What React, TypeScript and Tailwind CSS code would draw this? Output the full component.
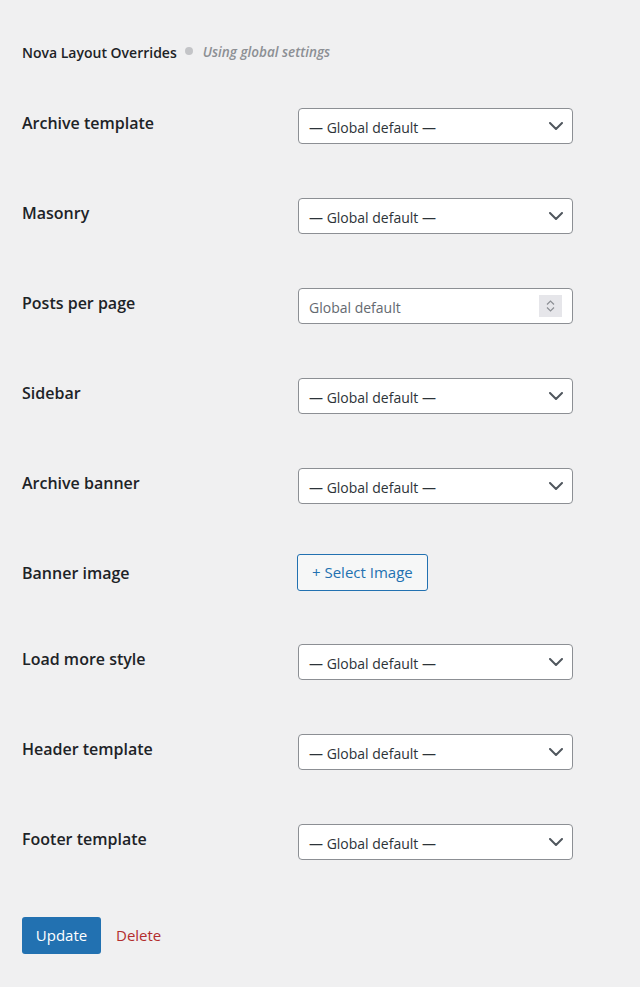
import React from "react";

type Field =
  | { label: string; kind: "select"; h: string }
  | { label: string; kind: "number"; h: string }
  | { label: string; kind: "image"; h: string };

const fields: Field[] = [
  { label: "Archive template", kind: "select", h: "h-[90px]" },
  { label: "Masonry", kind: "select", h: "h-[90px]" },
  { label: "Posts per page", kind: "number", h: "h-[90px]" },
  { label: "Sidebar", kind: "select", h: "h-[90px]" },
  { label: "Archive banner", kind: "select", h: "h-[86px]" },
  { label: "Banner image", kind: "image", h: "h-[90px]" },
  { label: "Load more style", kind: "select", h: "h-[90px]" },
  { label: "Header template", kind: "select", h: "h-[90px]" },
  { label: "Footer template", kind: "select", h: "h-[93px]" },
];

function Chevron() {
  return (
    <svg width="14" height="8" viewBox="0 0 14 8" fill="none" className="shrink-0">
      <path d="M1 1l6 6 6-6" stroke="#50575e" strokeWidth="2" strokeLinecap="round" strokeLinejoin="round" />
    </svg>
  );
}

function SelectBox() {
  return (
    <div className="flex h-[36px] w-[275px] items-center justify-between rounded-[4px] border border-[#8c8f94] bg-white pl-[10px] pr-[9px] text-[14px] text-[#2c3338]">
      <span className="translate-y-[1px]">— Global default —</span>
      <Chevron />
    </div>
  );
}

function NumberBox() {
  return (
    <div className="flex h-[36px] w-[275px] items-center justify-between rounded-[4px] border border-[#8c8f94] bg-white pl-[10px] pr-[10px] text-[14px] text-[#646970]">
      <span className="translate-y-[1px]">Global default</span>
      <div className="flex h-[22px] w-[23px] flex-col items-center justify-center gap-[2px] bg-[#e6e6ea]">
        <svg width="9" height="5" viewBox="0 0 9 5" fill="none">
          <path d="M1 4.5l3.5-3.5 3.5 3.5" stroke="#8c8f94" strokeWidth="1.2" />
        </svg>
        <svg width="9" height="5" viewBox="0 0 9 5" fill="none">
          <path d="M1 0.5l3.5 3.5 3.5-3.5" stroke="#8c8f94" strokeWidth="1.2" />
        </svg>
      </div>
    </div>
  );
}

function ImageButton() {
  return (
    <button className="-ml-px flex h-[37px] items-center rounded-[3px] border border-[#2271b1] bg-[#f6f7f7] px-[14px] text-[15px] text-[#2271b1]">
      + Select Image
    </button>
  );
}

export default function App() {
  return (
    <div
      className="min-h-[987px] bg-[#f0f0f1] px-[22px] pt-[42px] text-[#1d2327]"
      style={{ fontFamily: '"Open Sans", "Noto Sans", sans-serif' }}
    >
      <div className="flex items-center h-[20px]">
        <span className="text-[14px] font-semibold text-[#1d2327]">Nova Layout Overrides</span>
        <span className="ml-[8px] h-[8px] w-[8px] -translate-y-[1px] rounded-full bg-[#c3c4c7]" />
        <span className="ml-[10px] text-[13.5px] font-semibold italic text-[#8c8f94]">Using global settings</span>
      </div>

      <div className="mt-[46px] flex flex-col">
        {fields.map((f) => (
          <div key={f.label} className={`flex items-start ${f.h}`}>
            <div
              className={`w-[276px] shrink-0 text-[16px] font-semibold leading-[22px] text-[#1d2327] ${
                f.kind === "image" ? "pt-[8px]" : "pt-[4px]"
              }`}
            >
              {f.label}
            </div>
            {f.kind === "select" && <SelectBox />}
            {f.kind === "number" && <NumberBox />}
            {f.kind === "image" && <ImageButton />}
          </div>
        ))}
      </div>

      <div className="flex items-center gap-[15px]">
        <button className="h-[37px] w-[79px] rounded-[3px] bg-[#2271b1] text-[15px] text-white">Update</button>
        <span className="text-[15px] text-[#b32d2e]">Delete</span>
      </div>
    </div>
  );
}
